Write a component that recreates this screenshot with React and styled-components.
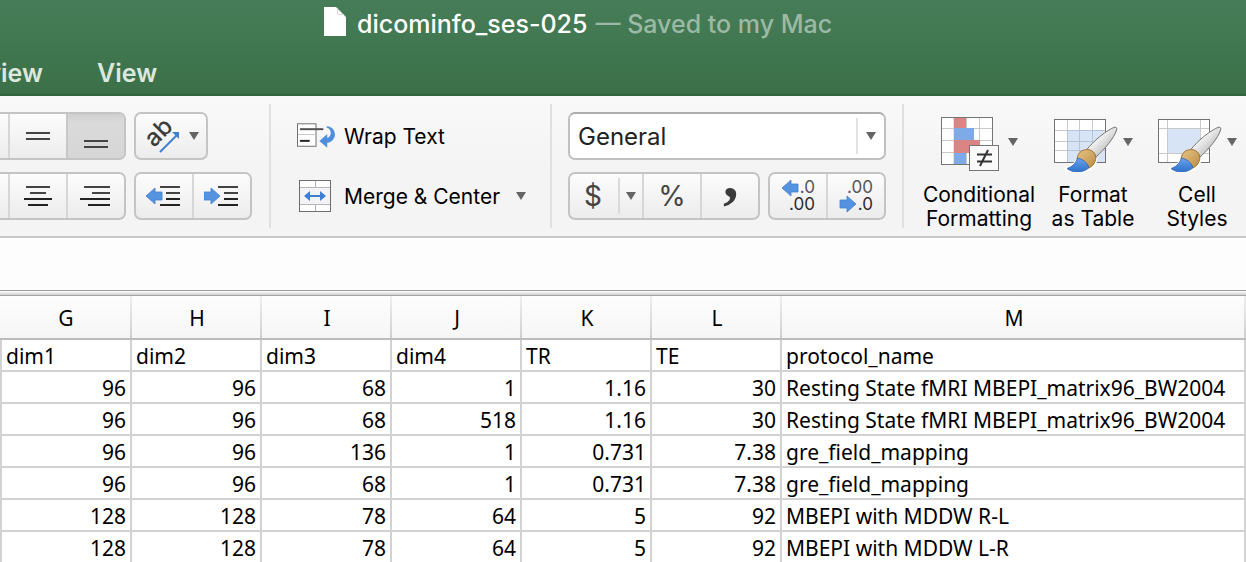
import React from "react";
import styled, { createGlobalStyle } from "styled-components";

const GlobalStyle = createGlobalStyle`
  *, *::before, *::after { box-sizing: border-box; }
  body { margin: 0; background: #fff; font-family: Inter, "Liberation Sans", sans-serif; }
  button, select, input { font: inherit; color: inherit; margin: 0; }
`;

const Window = styled.div`
  display: flex;
  flex-direction: column;
  height: 100vh;
  overflow: hidden;
  color: #000;
`;

const TopBar = styled.header`
  flex: none;
  background: linear-gradient(#467d58, #3b7048);
  border-bottom: 2px solid #31653f;
`;

const TitleBar = styled.div`
  display: flex;
  align-items: center;
  height: 48px;
  padding-left: 324px;
  font-size: 25px;
  white-space: nowrap;
`;

const FileIcon = styled.svg`
  display: block;
  flex: none;
  margin: 0 11px 6px 0;
`;

const FileName = styled.h1`
  margin: 0 8px 0 0;
  font-size: 25px;
  font-weight: 500;
  color: #fff;
`;

const SavedState = styled.span`
  color: #9cb9a5;
  font-weight: 500;
`;

const Tabs = styled.nav`
  display: flex;
  gap: 54px;
  height: 46px;
  padding-top: 4px;
`;

const Tab = styled.a`
  display: flex;
  align-items: center;
  justify-content: flex-end;
  width: ${(p) => p.$width || "auto"};
  overflow: hidden;
  font-size: 25px;
  font-weight: 600;
  line-height: 42px;
  color: #dce8df;
  text-decoration: none;
`;

const Ribbon = styled.div`
  display: flex;
  flex: none;
  padding: 8px 0 5px;
  background: linear-gradient(#f9f9f9, #f4f4f4 50%, #f4f4f4);
  border-bottom: 2px solid #c9c9c9;
  white-space: nowrap;
`;

const Group = styled.section`
  display: flex;
  flex-direction: column;
  flex: none;
  gap: 12px;
  width: ${(p) => p.$width};
  padding: ${(p) => p.$pad || "8px 16px 0"};
`;

const Divider = styled.div`
  flex: none;
  width: 2px;
  height: 124px;
  background: #e0e0e0;
`;

const Row = styled.div`
  display: flex;
  gap: 8px;
  height: 48px;
`;

const Segments = styled.div`
  display: flex;
  flex: none;
  height: 48px;
  overflow: hidden;
  background: linear-gradient(#fcfcfc, #ececec);
  border: 2px solid #c4c4c4;
  border-radius: 7px;
  ${(p) => p.$cutLeft && "border-left: 0; border-top-left-radius: 0; border-bottom-left-radius: 0;"}
`;

const Segment = styled.button`
  box-sizing: content-box;
  display: flex;
  flex: none;
  align-items: center;
  justify-content: center;
  gap: ${(p) => p.$gap || "0"};
  width: ${(p) => p.$width || "56px"};
  height: 44px;
  padding: 0;
  border: 0;
  color: #444;
  font-size: 28px;
  line-height: 44px;
  background: ${(p) => (p.$pressed ? "linear-gradient(#cfcfcf, #dadada 20%, #d6d6d6)" : "transparent")};
  &:not(:first-child) { border-left: 2px solid ${(p) => (p.$pressed ? "#c8c8c8" : "#d6d6d6")}; }
`;

const Symbol = styled.span`
  width: 46px;
  margin-right: 2px;
`;

const MenuPart = styled.span`
  display: flex;
  align-items: center;
  justify-content: center;
  width: 24px;
  height: 36px;
  border-left: 2px solid #dadada;
`;

const Command = styled.button`
  display: flex;
  align-items: center;
  gap: 8px;
  height: 48px;
  padding: 0;
  border: 0;
  background: none;
  font-size: 21px;
`;

const IconSlot = styled.span`
  display: flex;
  justify-content: flex-start;
  width: 39px;
`;

const CommandText = styled.span`
  margin-right: 8px;
`;

const SelectBox = styled.div`
  display: flex;
  align-items: center;
  height: 48px;
  background: #fff;
  border: 2px solid #c0c0c0;
  border-top-color: #adadad;
  border-radius: 7px;
`;

const Select = styled.select`
  flex: 1;
  height: 44px;
  padding: 0 0 0 8px;
  border: 0;
  background: transparent;
  appearance: none;
  font-size: 24px;
  color: #222;
`;

const SelectArrow = styled.span`
  display: flex;
  justify-content: center;
  align-items: center;
  width: 28px;
  height: 36px;
  border-left: 2px solid #e2e2e2;
`;

const Gallery = styled.div`
  display: flex;
  flex: none;
  gap: 8px;
  padding: 8px 0 0 17px;
`;

const BigButton = styled.button`
  display: flex;
  flex-direction: column;
  align-items: center;
  gap: 11px;
  width: ${(p) => p.$width || "96px"};
  padding: 0;
  border: 0;
  background: none;
  font-size: 21px;
  line-height: 24px;
`;

const BigIcon = styled.span`
  display: flex;
  align-items: center;
  gap: ${(p) => p.$gap || "5px"};
  height: 60px;
`;

const FormulaBar = styled.input`
  flex: none;
  width: 100%;
  height: 52px;
  padding: 0 8px;
  border: 0;
  outline: 0;
  background: #fdfdfd;
  font-size: 21px;
`;

const Splitter = styled.div`
  flex: none;
  height: 6px;
  border-top: 1px solid #9c9c9c;
  border-bottom: 1px solid #a4a4a4;
  background: linear-gradient(#fff, #cfcfcf);
`;

const Sheet = styled.table`
  flex: none;
  width: 100%;
  table-layout: fixed;
  border-collapse: separate;
  border-spacing: 0;
  font-family: "Noto Sans", "Open Sans", sans-serif;
  font-size: 21px;
  line-height: 28px;
`;

const Col = styled.col`
  width: ${(p) => p.$width};
`;

const ColumnHead = styled.th`
  height: 44px;
  padding: 2px 0 0;
  font-weight: 400;
  border: 0 solid #bcbcbc;
  border-bottom-width: 2px;
  background:
    linear-gradient(#efefef, #cfcfcf) right / 2px 100% no-repeat,
    linear-gradient(#fdfdfd, #f6f6f6);
`;

const Cell = styled.td`
  height: 32px;
  padding: 2px 4px 0;
  border-right: 2px solid #d2d2d2;
  border-bottom: 2px solid #d2d2d2;
  white-space: nowrap;
  text-align: ${(p) => (p.$number ? "right" : "left")};
  &:first-child { border-left: 2px solid #d2d2d2; }
`;

const Caret = () => (
  <svg width="10" height="8" viewBox="0 0 10 8" aria-hidden="true">
    <path d="M0 0H10L5 8Z" fill="#646464" />
  </svg>
);

/* Horizontal strokes, each given as [x, y, width]. */
const Lines = ({ rows, width = 32, children }) => (
  <svg width={width} height="32" viewBox={`0 0 ${width} 32`} aria-hidden="true">
    {rows.map(([x, y, w], i) => (
      <rect key={i} x={x} y={y} width={w} height="2" fill={i > 1 ? "#222" : "#444"} />
    ))}
    {children}
  </svg>
);

const LEFT_ARROW = "M0 16L9 8V12H16V20H9V24Z";
const RIGHT_ARROW = "M16 16L7 8V12H0V20H7V24Z";
const INDENT_ROWS = [[14, 6, 20], [20, 12, 14], [20, 18, 14], [14, 24, 20]];

const Arrow = ({ d, transform }) => (
  <path d={d} transform={transform} fill="#5592e0" stroke="#4380d2" strokeWidth="0.8" strokeLinejoin="round" />
);

const OrientationIcon = () => (
  <svg width="36" height="36" viewBox="0 0 36 36" aria-hidden="true">
    <text x="11" y="30" transform="rotate(-45 11 30)" fontSize="24" fontWeight="500" fill="#3c3c3c">ab</text>
    <path d="M17 34L34 17" stroke="#3f7fd2" strokeWidth="2" />
    <path d="M29 14H36V21Z" fill="#3f7fd2" />
  </svg>
);

const WrapIcon = () => (
  <svg width="40" height="26" viewBox="0 0 40 26" aria-hidden="true">
    <rect x="0.5" y="0.5" width="19" height="23" fill="#fff" stroke="#6e6e6e" />
    <path d="M1 11.5H19" stroke="#c6c6c6" />
    <path d="M3 6H27" stroke="#505050" strokeWidth="2" />
    <path d="M3 18H13" stroke="#222" strokeWidth="2" />
    <path d="M31 3C41 4 42 18 31 20V25L23 18L31 11V15C36 13 36 6 30 4Z" fill="#4f8ddd" />
  </svg>
);

const MergeIcon = () => (
  <svg width="34" height="32" viewBox="-2 0 34 32" aria-hidden="true">
    <rect x="0.5" y="0.5" width="31" height="31" fill="#fff" stroke="#6e6e6e" />
    <rect x="1" y="7" width="30" height="18" fill="#f4f4f4" />
    <path d="M1 7.5H31M1 24.5H31M16.5 1V7M16.5 25V31" stroke="#b4b4b4" />
    <path d="M5 16L11 11V15H21V11L27 16L21 21V17H11V21Z" fill="#3f7fd2" />
  </svg>
);

const CommaIcon = () => (
  <svg width="24" height="32" viewBox="0 0 24 32" aria-hidden="true">
    <text x="2" y="48" fontFamily="Liberation Serif, serif" fontWeight="700" fontSize="62" fill="#3a3a3a">’</text>
  </svg>
);

const DecimalIcon = ({ decrease }) => (
  <svg width="34" height="34" viewBox="0 0 34 34" aria-hidden="true">
    <Arrow
      d={decrease ? RIGHT_ARROW : LEFT_ARROW}
      transform={decrease ? "translate(1 9)" : "translate(1 -7)"}
    />
    <text x="34" y="14" textAnchor="end" fontSize="17" fill="#555">{decrease ? ".00" : ".0"}</text>
    <text x="34" y="31" textAnchor="end" fontSize="17" fill="#2c2c2c">{decrease ? ".0" : ".00"}</text>
  </svg>
);

const ConditionalIcon = () => (
  <svg width="59" height="60" viewBox="0 -4 59 60" aria-hidden="true">
    <rect x="0.5" y="1.5" width="51" height="47" fill="#fff" stroke="#747474" />
    <path d="M25.5 2V48M38.5 2V48M1 12.5H51M1 24.5H51M1 36.5H51M13 2V48" stroke="#c9c9c9" />
    <rect x="13" y="2" width="12" height="10" fill="#da8584" />
    <rect x="13" y="12" width="20" height="12" fill="#7eabe8" />
    <rect x="13" y="24" width="26" height="13" fill="#da8584" />
    <rect x="13" y="37" width="12" height="11" fill="#7eabe8" />
    <rect x="28.5" y="29.5" width="29" height="25" fill="#fafafa" stroke="#747474" />
    <path d="M36 38.5H51M36 45.5H51M47 34L39 50" stroke="#333" strokeWidth="2" />
  </svg>
);

const BrushIcon = ({ id, styles }) => (
  <svg width="64" height="60" viewBox="0 -4 64 60" aria-hidden="true">
    <defs>
      <linearGradient id={`${id}-handle`} x1="0" y1="0" x2="1" y2="1">
        <stop offset="0.3" stopColor="#fff" />
        <stop offset="0.7" stopColor="#c4c4c4" />
      </linearGradient>
      <linearGradient id={`${id}-ferrule`} x1="0" y1="0" x2="1" y2="1">
        <stop offset="0" stopColor="#e9c586" />
        <stop offset="1" stopColor="#b98a45" />
      </linearGradient>
      <linearGradient id={`${id}-tip`} x1="0" y1="0" x2="0" y2="1">
        <stop offset="0" stopColor="#6aa2ec" />
        <stop offset="1" stopColor="#2f70cb" />
      </linearGradient>
    </defs>
    <rect x="0.5" y="3.5" width="51" height="43" fill="#fff" stroke="#747474" />
    {styles ? (
      <>
        <rect x="10" y="13" width="32" height="25" fill="#d7e4f5" />
        <path d="M9.5 4V46M42.5 4V46M1 12.5H51M1 37.5H51" stroke="#c9c9c9" />
      </>
    ) : (
      <>
        <rect x="13" y="14" width="38" height="32" fill="#d7e4f5" />
        <path d="M13.5 4V14M25.5 4V14M38.5 4V14M1 14.5H13M1 25.5H13M1 34.5H13" stroke="#c9c9c9" />
        <path d="M13.5 14V46M25.5 14V46M38.5 14V46M13 14.5H51M13 25.5H51M13 34.5H51" stroke="#b4c3d8" />
      </>
    )}
    <path d="M61 13C55 15 43 24 34 35C27 35 25 39 24 43C22 49 17 52 13 53C20 58 32 57 37 51C41 48 42 44 41 40C50 32 60 19 61 13Z" fill="#fff" stroke="#fff" strokeWidth="4" strokeLinejoin="round" />
    <path d="M32 34.5C41 23 53 14.500 60 11.4Q63.5 10.500 62.6 14C60 22 51 33 42 41Z" fill={`url(#${id}-handle)`} stroke="#737373" />
    <path d="M23 43C24 35 30 32.500 36 34C41.500 36 43 41 41 45.500C39.500 49.500 37 51 34.500 52Z" fill={`url(#${id}-ferrule)`} stroke="#9c7134" />
    <path d="M23.500 42C21.500 48 17.500 51 13 52.500C19 57.500 30 57 35 51.500C33 46.500 29 43 23.500 42Z" fill={`url(#${id}-tip)`} stroke="#2c66b8" strokeWidth="0.8" />
  </svg>
);

const COLUMNS = ["G", "H", "I", "J", "K", "L", "M"];
const ROWS = [
  ["dim1", "dim2", "dim3", "dim4", "TR", "TE", "protocol_name"],
  ["96", "96", "68", "1", "1.16", "30", "Resting State fMRI MBEPI_matrix96_BW2004"],
  ["96", "96", "68", "518", "1.16", "30", "Resting State fMRI MBEPI_matrix96_BW2004"],
  ["96", "96", "136", "1", "0.731", "7.38", "gre_field_mapping"],
  ["96", "96", "68", "1", "0.731", "7.38", "gre_field_mapping"],
  ["128", "128", "78", "64", "5", "92", "MBEPI with MDDW R-L"],
  ["128", "128", "78", "64", "5", "92", "MBEPI with MDDW L-R"],
];

export default function App() {
  return (
    <Window>
      <GlobalStyle />
      <TopBar>
        <TitleBar>
          <FileIcon width="22" height="29" viewBox="0 0 22 29" aria-hidden="true">
            <path d="M0 0H12L22 10V29H0Z" fill="#fff" />
            <path d="M13.500 1.500V7.500H20" fill="none" stroke="#d8d8d8" />
          </FileIcon>
          <FileName>dicominfo_ses-025</FileName>
          <SavedState>— Saved to my Mac</SavedState>
        </TitleBar>
        <Tabs aria-label="Ribbon tabs">
          <Tab href="#review" $width="43px">Review</Tab>
          <Tab href="#view">View</Tab>
        </Tabs>
      </TopBar>

      <Ribbon>
        <Group aria-label="Alignment" $width="269px" $pad="8px 0 0">
          <Row>
            <Segments $cutLeft>
              <Segment $width="8px" aria-label="Top align" />
              <Segment aria-label="Middle align">
                <Lines rows={[[4, 12, 24], [4, 18, 24]]} />
              </Segment>
              <Segment $pressed aria-label="Bottom align" aria-pressed="true">
                <Lines rows={[[4, 20, 24], [4, 26, 24]]} />
              </Segment>
            </Segments>
            <Segments>
              <Segment $width="70px" $gap="10px" aria-label="Orientation">
                <OrientationIcon />
                <Caret />
              </Segment>
            </Segments>
          </Row>
          <Row>
            <Segments $cutLeft>
              <Segment $width="8px" aria-label="Align left" />
              <Segment aria-label="Align center">
                <Lines rows={[[4, 6, 24], [8, 12, 16], [2, 18, 28], [6, 24, 20]]} />
              </Segment>
              <Segment aria-label="Align right">
                <Lines rows={[[4, 6, 26], [12, 12, 18], [0, 18, 30], [8, 24, 22]]} />
              </Segment>
            </Segments>
            <Segments>
              <Segment aria-label="Decrease indent">
                <Lines width={36} rows={INDENT_ROWS}><Arrow d={LEFT_ARROW} /></Lines>
              </Segment>
              <Segment aria-label="Increase indent">
                <Lines width={36} rows={INDENT_ROWS}><Arrow d={RIGHT_ARROW} /></Lines>
              </Segment>
            </Segments>
          </Row>
        </Group>
        <Divider />
        <Group aria-label="Cell layout" $width="279px" $pad="8px 0 0 26px">
          <Command>
            <IconSlot><WrapIcon /></IconSlot>
            <CommandText>Wrap Text</CommandText>
          </Command>
          <Command>
            <IconSlot><MergeIcon /></IconSlot>
            <CommandText>Merge &amp; Center</CommandText>
            <Caret />
          </Command>
        </Group>
        <Divider />
        <Group aria-label="Number" $width="350px">
          <SelectBox>
            <Select aria-label="Number format" defaultValue="General">
              <option>General</option>
            </Select>
            <SelectArrow><Caret /></SelectArrow>
          </SelectBox>
          <Row>
            <Segments>
              <Segment $width="72px" aria-label="Currency">
                <Symbol>$</Symbol>
                <MenuPart><Caret /></MenuPart>
              </Segment>
              <Segment aria-label="Percent">%</Segment>
              <Segment aria-label="Comma style"><CommaIcon /></Segment>
            </Segments>
            <Segments>
              <Segment aria-label="Increase decimal"><DecimalIcon /></Segment>
              <Segment aria-label="Decrease decimal"><DecimalIcon decrease /></Segment>
            </Segments>
          </Row>
        </Group>
        <Divider />
        <Gallery>
          <BigButton $width="116px">
            <BigIcon $gap="8px"><ConditionalIcon /><Caret /></BigIcon>
            <span>Conditional<br />Formatting</span>
          </BigButton>
          <BigButton>
            <BigIcon><BrushIcon id="format" /><Caret /></BigIcon>
            <span>Format<br />as Table</span>
          </BigButton>
          <BigButton>
            <BigIcon><BrushIcon id="cell" styles /><Caret /></BigIcon>
            <span>Cell<br />Styles</span>
          </BigButton>
        </Gallery>
      </Ribbon>

      <FormulaBar aria-label="Formula bar" />
      <Splitter />

      <Sheet>
        <colgroup>
          {COLUMNS.map((c, i) => (
            <Col key={c} $width={i === 0 ? "132px" : i < 6 ? "130px" : "auto"} />
          ))}
        </colgroup>
        <thead>
          <tr>
            {COLUMNS.map((c) => <ColumnHead key={c} scope="col">{c}</ColumnHead>)}
          </tr>
        </thead>
        <tbody>
          {ROWS.map((row, r) => (
            <tr key={r}>
              {row.map((value, c) => (
                <Cell key={c} $number={r > 0 && c < 6}>{value}</Cell>
              ))}
            </tr>
          ))}
        </tbody>
      </Sheet>
    </Window>
  );
}
